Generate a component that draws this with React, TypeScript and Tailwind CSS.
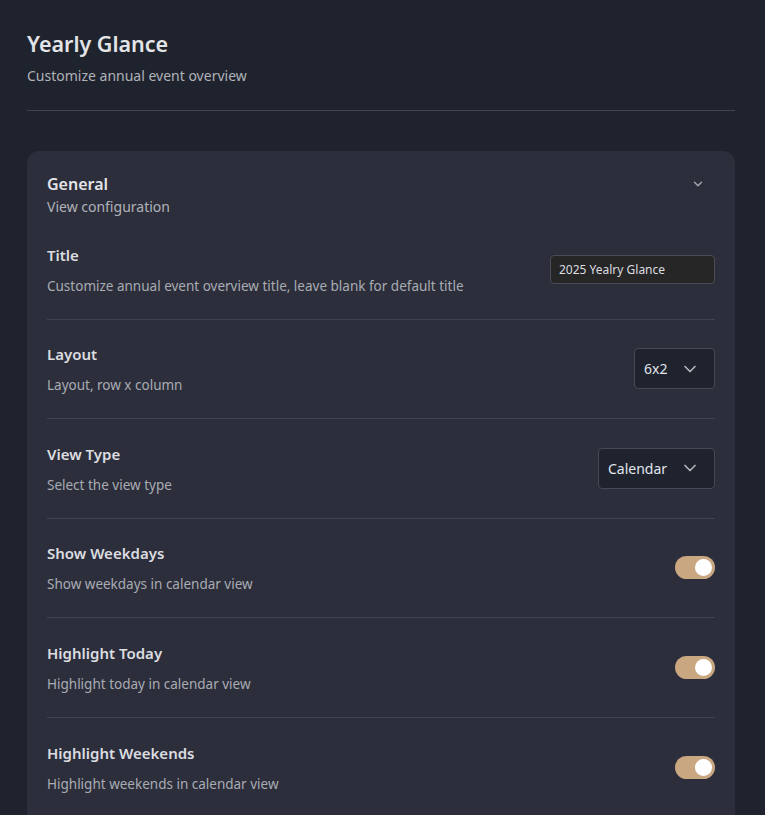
import React, { useState } from 'react';

const ChevronDown = ({ className, strokeWidth = 2 }: { className?: string; strokeWidth?: number }) => (
    <svg viewBox="0 0 24 24" fill="none" stroke="currentColor" strokeWidth={strokeWidth} strokeLinecap="round" strokeLinejoin="round" className={className}>
        <path d="M6 9l6 6 6-6" />
    </svg>
);

const Toggle = ({ on, onChange }: { on: boolean; onChange: () => void }) => (
    <button
        onClick={onChange}
        className={`relative w-[40px] h-[23px] rounded-full shrink-0 ${on ? 'bg-[#c8a781]' : 'bg-[#4a4e5a]'}`}
    >
        <span className={`absolute top-[3px] w-[17px] h-[17px] rounded-full bg-white ${on ? 'left-[20px]' : 'left-[3px]'}`} />
    </button>
);

const SettingRow = ({ label, desc, last, children }: { label: string; desc: string; last?: boolean; children: React.ReactNode }) => (
    <div className={`flex items-center justify-between gap-6 h-[99.5px] ${last ? '' : 'border-b border-[#41444f]'}`}>
        <div className="flex flex-col">
            <div className="text-[15px] font-semibold text-[#dcdde0] leading-[22px]">{label}</div>
            <div className="text-[13.5px] text-[#a9abb3] leading-[18px] mt-[11px]">{desc}</div>
        </div>
        {children}
    </div>
);

const Select = ({ value, className }: { value: string; className: string }) => (
    <button className={`flex items-center justify-between h-[41px] pl-[9px] pr-[14px] rounded-[4px] border border-[#464953] bg-[#1f232d] text-[14px] text-[#e2e6ee] ${className}`}>
        <span>{value}</span>
        <ChevronDown className="w-[20px] h-[20px] text-[#b4b6bc]" />
    </button>
);

export default function App() {
    const [weekdays, setWeekdays] = useState(true);
    const [today, setToday] = useState(true);
    const [weekends, setWeekends] = useState(true);

    return (
        <div className="min-h-screen bg-[#1f232d] pl-[27px] pr-[30px] pt-[29px] pb-10 font-['Noto_Sans',sans-serif]">
            <div className="pb-[24px] border-b border-[#41444f]">
                <h1 className="text-[21.5px] font-semibold text-[#e3e4e7] leading-[30px]">Yearly Glance</h1>
                <p className="text-[14px] text-[#b0b2b9] mt-[7px] leading-[20px]">Customize annual event overview</p>
            </div>

            <div className="mt-[40px] rounded-[12px] bg-[#2c2f3b] px-[20px] pt-[22px] pb-[20px]">
                <div className="flex items-start justify-between">
                    <div>
                        <h2 className="text-[16px] font-semibold text-[#e3e4e7] leading-[22px]">General</h2>
                        <p className="text-[14px] text-[#b0b2b9] leading-[20px] mt-[2px]">View configuration</p>
                    </div>
                    <ChevronDown strokeWidth={2.5} className="w-[14px] h-[14px] text-[#a3a5ac] mt-[4px] mr-[10px]" />
                </div>

                <div className="mt-[3px]">
                    <SettingRow label="Title" desc="Customize annual event overview title, leave blank for default title">
                        <input
                            defaultValue="2025 Yealry Glance"
                            className="w-[165px] h-[29px] px-[8px] rounded-[4px] border border-[#4a4d55] bg-[#262626] text-[12px] text-[#dcdde0] outline-none"
                        />
                    </SettingRow>
                    <SettingRow label="Layout" desc="Layout, row x column">
                        <Select value="6x2" className="w-[81px]" />
                    </SettingRow>
                    <SettingRow label="View Type" desc="Select the view type">
                        <Select value="Calendar" className="w-[117px]" />
                    </SettingRow>
                    <SettingRow label="Show Weekdays" desc="Show weekdays in calendar view">
                        <Toggle on={weekdays} onChange={() => setWeekdays(!weekdays)} />
                    </SettingRow>
                    <SettingRow label="Highlight Today" desc="Highlight today in calendar view">
                        <Toggle on={today} onChange={() => setToday(!today)} />
                    </SettingRow>
                    <SettingRow label="Highlight Weekends" desc="Highlight weekends in calendar view" last>
                        <Toggle on={weekends} onChange={() => setWeekends(!weekends)} />
                    </SettingRow>
                </div>
            </div>
        </div>
    );
}
